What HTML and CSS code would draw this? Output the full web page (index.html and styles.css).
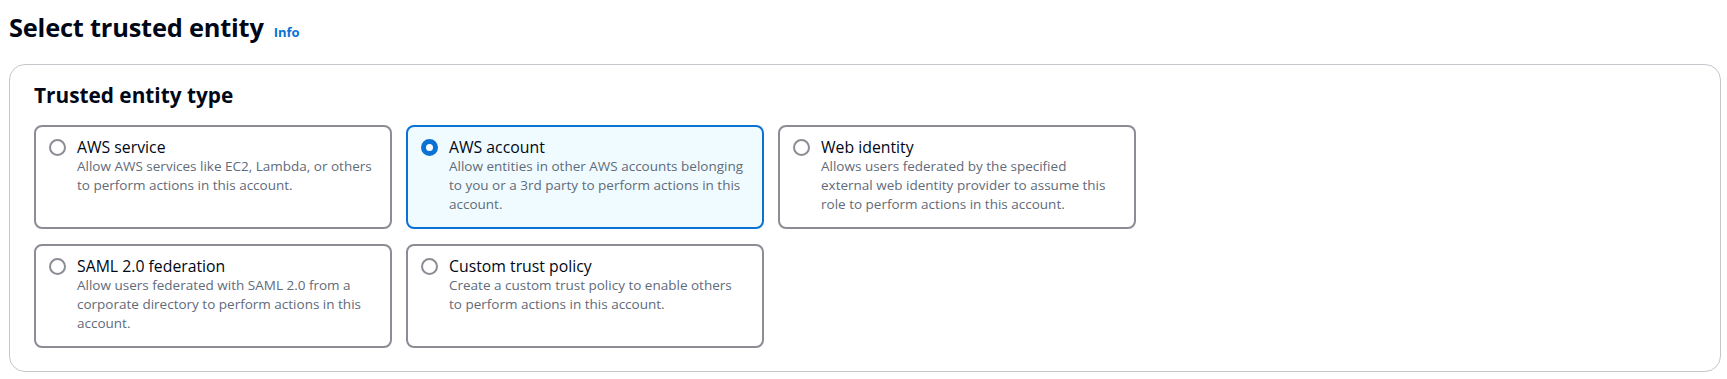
FILE: index.html
```html
<!DOCTYPE html>
<html lang="en">
<head>
    <meta charset="UTF-8">
    <meta name="viewport" content="width=device-width, initial-scale=1.0">
    <title>Select trusted entity</title>
    <link rel="stylesheet" href="styles.css">
</head>
<body>
    <!-- Page header -->
    <div class="page-header">
        <h1 class="page-title">Select trusted entity</h1>
        <a class="info-link" href="#">Info</a>
    </div>

    <!-- Trusted entity type panel -->
    <div class="panel">
        <h2 class="panel-title">Trusted entity type</h2>
        <div class="tiles">
            <label class="tile">
                <span class="radio"></span>
                <span class="tile-text">
                    <span class="tile-label">AWS service</span>
                    <span class="tile-desc">Allow AWS services like EC2, Lambda, or others to perform actions in this account.</span>
                </span>
            </label>
            <label class="tile selected">
                <span class="radio checked"></span>
                <span class="tile-text">
                    <span class="tile-label">AWS account</span>
                    <span class="tile-desc">Allow entities in other AWS accounts belonging to you or a 3rd party to perform actions in this account.</span>
                </span>
            </label>
            <label class="tile">
                <span class="radio"></span>
                <span class="tile-text">
                    <span class="tile-label">Web identity</span>
                    <span class="tile-desc">Allows users federated by the specified external web identity provider to assume this role to perform actions in this account.</span>
                </span>
            </label>
            <label class="tile">
                <span class="radio"></span>
                <span class="tile-text">
                    <span class="tile-label">SAML 2.0 federation</span>
                    <span class="tile-desc">Allow users federated with SAML 2.0 from a corporate directory to perform actions in this account.</span>
                </span>
            </label>
            <label class="tile">
                <span class="radio"></span>
                <span class="tile-text">
                    <span class="tile-label">Custom trust policy</span>
                    <span class="tile-desc">Create a custom trust policy to enable others to perform actions in this account.</span>
                </span>
            </label>
        </div>
    </div>
</body>
</html>
```

FILE: styles.css
```css
body {
    margin: 0;
    padding: 0 6px 0 9px;
    background-color: #fff;
    color: #000716;
    font-family: 'Open Sans', sans-serif;
}
.page-header {
    display: flex;
    align-items: baseline;
    gap: 10px;
    padding-top: 12px;
}
.page-title {
    margin: 0;
    font-size: 25.4px;
    line-height: 30px;
    font-weight: 700;
    letter-spacing: -0.2px;
}
.info-link {
    font-size: 13px;
    font-weight: 700;
    color: #0972d3;
    text-decoration: none;
}
.panel {
    margin-top: 22px;
    border: 1px solid #c6c6cd;
    border-radius: 16px;
    padding: 18px 24px 23px;
}
.panel-title {
    margin: 0 0 18px;
    font-size: 20.8px;
    line-height: 24px;
    font-weight: 700;
}
.tiles {
    display: grid;
    grid-template-columns: repeat(3, 358px);
    gap: 15px 14px;
}
.tile {
    display: flex;
    align-items: flex-start;
    gap: 11px;
    padding: 10px 14px 13px 13px;
    border: 2px solid #8c8c94;
    border-radius: 8px;
    cursor: pointer;
}
.tile.selected {
    border-color: #0972d3;
    background-color: #f0fbff;
}
.radio {
    flex: none;
    width: 17px;
    height: 17px;
    margin-top: 2px;
    box-sizing: border-box;
    border: 2px solid #8c8c94;
    border-radius: 50%;
    background: #fff;
}
.radio.checked {
    border: 5px solid #0972d3;
}
.tile-text {
    display: flex;
    flex-direction: column;
}
.tile-label {
    font-size: 15.8px;
    line-height: 20px;
    color: #000716;
}
.tile-desc {
    font-size: 13.5px;
    line-height: 19px;
    color: #5f6b7a;
}
```
